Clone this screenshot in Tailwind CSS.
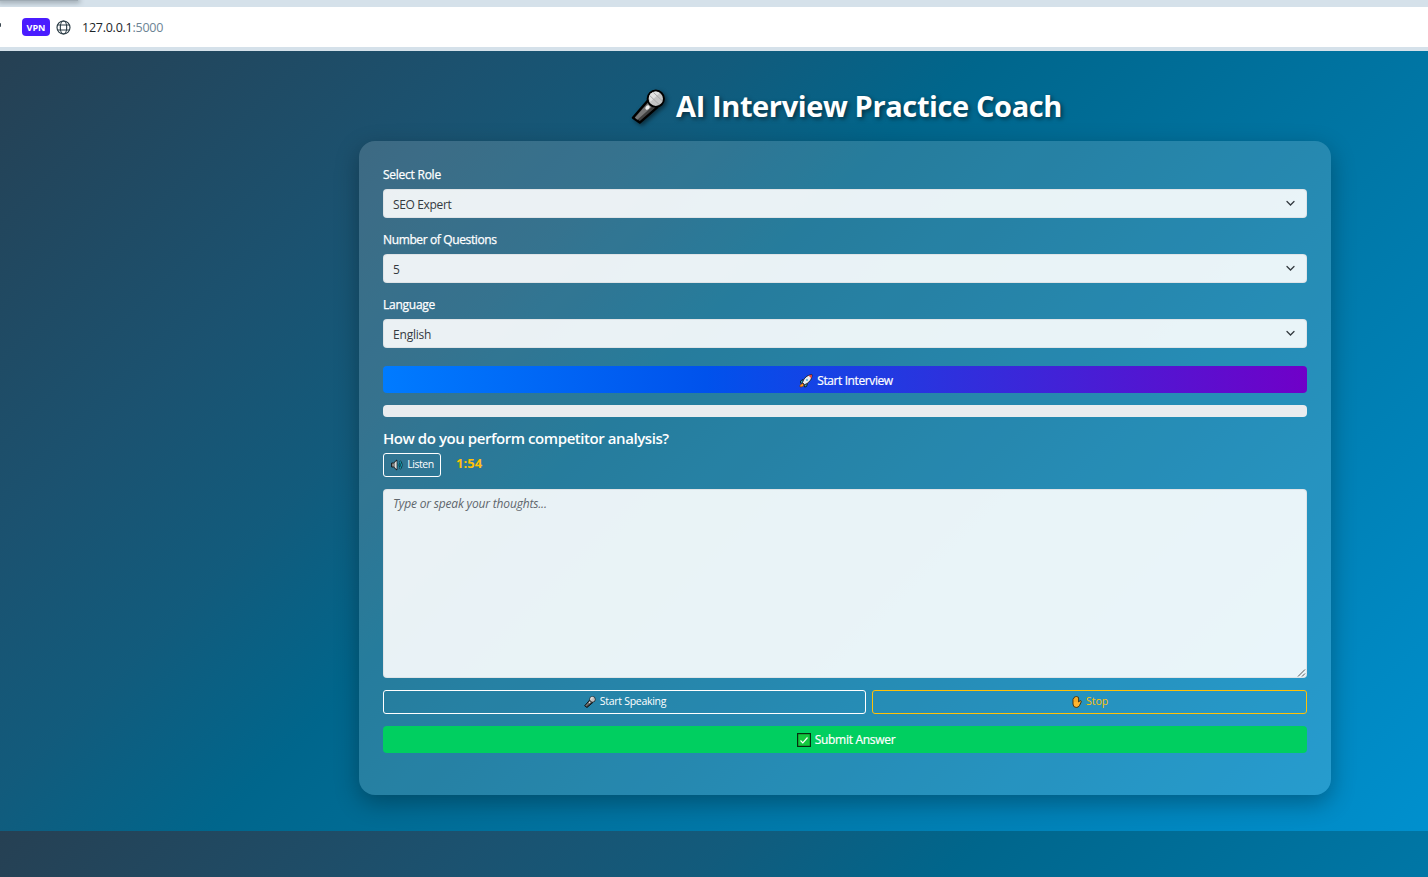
<!DOCTYPE html>
<html lang="en">
<head>
<meta charset="utf-8">
<title>AI Interview Practice Coach</title>
<script src="https://cdn.jsdelivr.net/npm/@tailwindcss/browser@4"></script>
</head>
<body class="h-[877px] w-[1428px] overflow-hidden font-['Open_Sans','Noto_Sans',sans-serif] text-[12px] text-white">
<svg class="hidden">
  <symbol id="mic" viewBox="0 0 36 36">
    <path d="M2 29.500 L18 11 L27 19 L9 34.500 Z" fill="#3f3f3f" stroke="#000" stroke-width="2.400" stroke-linejoin="round"/>
    <path d="M4 29.500 L18.500 13 L23 17 L6.500 31.500 Z" fill="#777"/>
    <circle cx="25.500" cy="10" r="8.400" fill="#c4c4c4" stroke="#000" stroke-width="2"/>
    <path d="M18.500 9 a7 7 0 0 1 7 -6.500 a8 8 0 0 1 4 1.500 L20 13z" fill="#e2e2e2"/>
    <path d="M19 6.500 L29 16 M23 3.500 L32 12" stroke="#a6a6a6" stroke-width="1"/>
    <ellipse cx="17" cy="19" rx="2.600" ry="1.900" transform="rotate(-45 17 19)" fill="#eee"/>
  </symbol>
</svg>
<div class="flex h-full flex-col">
  <header class="h-[51px] shrink-0 bg-[#d5e1ea]">
    <div class="h-[7px] overflow-hidden"><div class="h-px w-[78px] bg-[#9fabb4] shadow-[0_0_5px_2px_#9aa6ae]"></div></div>
    <div class="flex h-10 items-center bg-white">
      <div class="mb-1 h-1 w-px rounded-r bg-[#3b4851]"></div>
      <div class="ml-[21px] flex h-[18px] w-7 items-center justify-center rounded bg-[#4a1cff] pt-px text-[9px] font-bold">VPN</div>
      <svg class="ml-[6px] size-[15px]" viewBox="0 0 15 15" fill="none" stroke="#2b3c46" stroke-width="1.150"><circle cx="7.500" cy="7.500" r="6.500"/><ellipse cx="7.500" cy="7.500" rx="3.200" ry="6.500"/><path d="M1.500 5h12M1.500 10h12"/></svg>
      <div class="ml-[11px] pt-[2px] text-[12.500px] tracking-[-.25px] text-[#1d2429]">127.0.0.1<span class="text-[#6d8494]">:5000</span></div>
    </div>
  </header>
  <main class="flex-1 bg-[linear-gradient(135deg,#264053_0%,#1b5270_20%,#125b7c_30%,#00668c_40%,#0099dc_100%)] bg-[length:1690px_780px] pl-[359px] pt-[34px]">
    <h1 class="flex h-[44px] items-center pb-[3px] pl-[272px] text-[29px] font-bold leading-none tracking-[-.38px] [text-shadow:2px_2px_4px_rgba(0,0,0,.5)]">
      <svg class="mr-[10px] mt-[2px] size-[35px] drop-shadow-[2px_2px_2px_rgba(0,0,0,.5)]"><use href="#mic"/></svg><span>AI Interview Practice Coach</span>
    </h1>
    <section class="mt-3 h-[654px] w-[972px] rounded-2xl bg-white/15 px-6 pt-6 shadow-[0_8px_25px_rgba(0,0,0,.3)]">
      <label class="flex h-5 items-center tracking-[-.25px] [-webkit-text-stroke:.25px_white]">Select Role</label>
      <div class="mt-1 flex h-[29px] items-center justify-between rounded border border-[#dee2e6]/90 bg-white/90 px-[9px] text-[#343a40]"><span class="pt-[2px] tracking-[-.35px]">SEO Expert</span><svg class="mr-[2px] size-[9px]" viewBox="0 0 9 9" fill="none" stroke="#343a40" stroke-width="1.300" stroke-linecap="round"><path d="M1 2.500l3.500 3.500L8 2.500"/></svg></div>
      <label class="mt-3 flex h-5 items-center tracking-[-.37px] [-webkit-text-stroke:.25px_white]">Number of Questions</label>
      <div class="mt-1 flex h-[29px] items-center justify-between rounded border border-[#dee2e6]/90 bg-white/90 px-[9px] text-[#343a40]"><span class="pt-[2px]">5</span><svg class="mr-[2px] size-[9px]" viewBox="0 0 9 9" fill="none" stroke="#343a40" stroke-width="1.300" stroke-linecap="round"><path d="M1 2.500l3.500 3.500L8 2.500"/></svg></div>
      <label class="mt-3 flex h-5 items-center tracking-[-.25px] [-webkit-text-stroke:.25px_white]">Language</label>
      <div class="mt-1 flex h-[29px] items-center justify-between rounded border border-[#dee2e6]/90 bg-white/90 px-[9px] text-[#343a40]"><span class="pt-[2px] tracking-[-.2px]">English</span><svg class="mr-[2px] size-[9px]" viewBox="0 0 9 9" fill="none" stroke="#343a40" stroke-width="1.300" stroke-linecap="round"><path d="M1 2.500l3.500 3.500L8 2.500"/></svg></div>
      <div class="mt-[18px] flex h-[27px] items-center justify-center gap-1 rounded bg-[linear-gradient(90deg,#007bff,#0052ec_35%,#7000c8)] pl-[2px] pt-[2px]">
        <svg class="size-[14px]" viewBox="0 0 14 14"><path d="M4 5.500L1.500 7v2l3 .5zM8.500 9.500L7.500 12.500l-2 .5-.5-3z" fill="#31a5c9" stroke="#111" stroke-width=".8"/><path d="M3.500 9.500L1 11v2l2.500-.3L5 11z" fill="#ff9a1c" stroke="#7b2d10" stroke-width=".6"/><path d="M3.500 8.500C5 4 8 1 13 .7C13 5.500 10 9 5.500 10.700z" fill="#e9eef3" stroke="#111" stroke-width=".8"/><path d="M9.500 1.500L13 .7L12.500 4.500z" fill="#e23a32"/><circle cx="8" cy="6" r=".9" fill="#36a9d4"/></svg>
        <span class="tracking-[-.4px] [-webkit-text-stroke:.2px_white]">Start Interview</span>
      </div>
      <div class="mt-3 h-3 rounded bg-[#e9ecef]"></div>
      <h2 class="mt-3 flex h-5 items-center pb-[2px] text-[15px] font-semibold tracking-[-.43px]">How do you perform competitor analysis?</h2>
      <div class="mt-1 flex h-6 items-center">
        <div class="flex h-6 w-[58px] items-center justify-center gap-1 rounded-[3px] border border-white pl-px text-[10.500px]">
          <svg class="size-3" viewBox="0 0 12 12"><path d="M.6 4h2L5.800 1v10L2.600 8h-2z" fill="#8b8b8b" stroke="#111" stroke-width=".9"/><path d="M4 3.500L5.600 2v8L4 8.500z" fill="#ddd"/><path d="M7.500 4.200q1.200 1.800 0 3.600M9 2q3 4 0 8" fill="none" stroke="#0a252d" stroke-width="2"/><path d="M7.500 4.200q1.200 1.800 0 3.600M9.200 2.200q2.600 3.800 0 7.600" fill="none" stroke="#18a7bd" stroke-width="1"/></svg>
          <span class="tracking-[-.42px]">Listen</span>
        </div>
        <span class="ml-[15px] pb-[2px] text-[13px] font-bold tracking-[.1px] text-[#ffc107]">1:54</span>
      </div>
      <div class="relative mt-3 h-[189px] rounded border border-[#dee2e6]/90 bg-white/90 px-[9px] pt-[5px] italic tracking-[-.17px] text-[#5f666c]">Type or speak your thoughts...
        <svg class="absolute bottom-0 right-0 size-[9px]" viewBox="0 0 9 9" stroke="#444" stroke-width=".9"><path d="M1 8.500L8 1.500M5 8.500L8 5.500"/></svg></div>
      <div class="mt-3 flex h-6 gap-[6px] text-[10.500px]">
        <div class="flex w-[483px] items-center justify-center gap-1 rounded-[3px] border border-white pl-px"><svg class="size-3"><use href="#mic"/></svg><span class="tracking-[-.28px]">Start Speaking</span></div>
        <div class="flex flex-1 items-center justify-center gap-1 rounded-[3px] border border-[#ffc107] pl-px text-[#ffc107]"><svg class="h-3 w-[10px]" viewBox="0 0 10 12"><path d="M1 3.500q0-1.200 1-1.200q0-1.500 1.300-1.500q1-.6 1.800 0q1.400-.1 1.500 1.200V6L8 4.700q1.400-.2 1.300 1L7.500 9.500q-1 2-3.300 2Q1 11.300 1 8z" fill="#ffb52e" stroke="#3a2a0a" stroke-width=".9"/><path d="M3 2v4M5 2v4" stroke="#d08a15" stroke-width=".5"/></svg><span>Stop</span></div>
      </div>
      <div class="mt-3 flex h-[27px] items-center justify-center gap-1 rounded bg-[#00cf60] pl-[2px]"><svg class="size-[14px]" viewBox="0 0 14 14"><rect x=".6" y=".6" width="12.800" height="12.800" fill="#13c93f" stroke="#062d0f" stroke-width="1.200"/><path d="M3.500 7.500l2.300 2.300L10.500 4.500" fill="none" stroke="#fff" stroke-width="1.200"/></svg><span class="tracking-[-.3px] [-webkit-text-stroke:.2px_white]">Submit Answer</span></div>
    </section>
  </main>
</div>
</body>
</html>
